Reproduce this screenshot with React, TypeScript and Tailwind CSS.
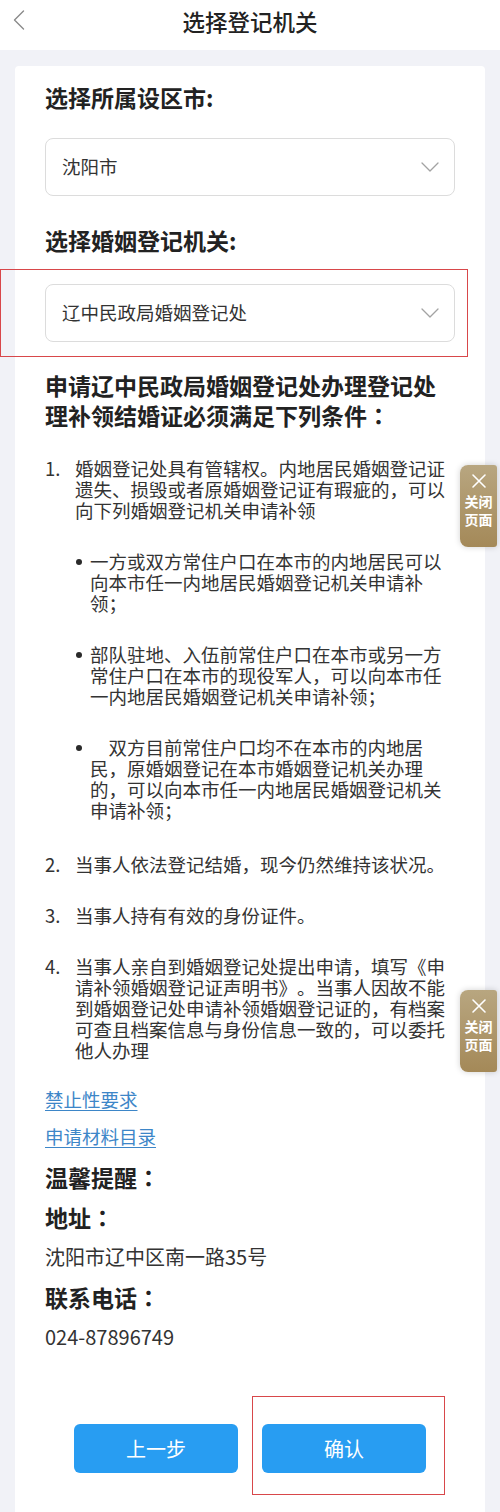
import React from 'react';

const CJK = { fontFamily: '"Noto Sans CJK SC", "Noto Sans", sans-serif' };

const Chevron: React.FC = () => (
  <svg width="18" height="10" viewBox="0 0 18 10" fill="none">
    <path d="M1 1l8 8 8-8" stroke="#a3a3a3" strokeWidth="1.3" strokeLinecap="round" strokeLinejoin="round" />
  </svg>
);

const Select: React.FC<{ value: string }> = ({ value }) => (
  <div className="flex h-[58px] items-center justify-between rounded-[8px] border border-[#dcdcdc] bg-white pl-[16px] pr-[15px]">
    <span className="text-[18.5px] text-[#333]">{value}</span>
    <Chevron />
  </div>
);

// full-width colon drawn centered, as in the screenshot
const Colon: React.FC = () => (
  <span style={{ fontFamily: '"Noto Sans CJK TC", sans-serif' }}>：</span>
);

const CloseTab: React.FC<{ top: string }> = ({ top }) => (
  <div
    className={`absolute right-[3px] ${top} flex h-[82px] w-[37px] flex-col items-center rounded-l-[8px] rounded-r-[3px] bg-gradient-to-b from-[#b8a680] to-[#a48958] pt-[8px] shadow-[0_0_6px_rgba(0,0,0,0.18)]`}
  >
    <svg width="16" height="16" viewBox="0 0 16 16" fill="none">
      <path d="M2 2l12 12M14 2L2 14" stroke="white" strokeWidth="1.6" strokeLinecap="round" />
    </svg>
    <div className="mt-[3px] text-center text-[14px] font-bold leading-[18px] text-white">
      关闭
      <br />
      页面
    </div>
  </div>
);

const NumItem: React.FC<{ n: number; children: React.ReactNode; className?: string }> = ({ n, children, className = '' }) => (
  <div className={`flex ${className}`}>
    <span className="w-[30px] shrink-0">{n}.</span>
    <div className="flex-1">{children}</div>
  </div>
);

const Bullet: React.FC<{ children: React.ReactNode }> = ({ children }) => (
  <div className="mt-[30px] flex">
    <span className="flex h-[21px] w-[15px] shrink-0 items-center">
      <span className="ml-[1px] block h-[6px] w-[6px] rounded-full bg-[#2a2a2a]" />
    </span>
    <span className="flex-1">{children}</span>
  </div>
);

export default function App() {
  return (
    <div
      className="relative min-h-[1512px] w-[500px] overflow-hidden bg-[#f1f2f7] [text-spacing-trim:space-all]"
      style={CJK}
    >
      {/* header */}
      <div className="relative flex h-[50px] items-start justify-center bg-white pt-[5px]">
        <svg className="absolute left-[13px] top-[10px]" width="12" height="20" viewBox="0 0 12 20" fill="none">
          <path d="M10.5 1L1.5 10l9 9" stroke="#8a8a8a" strokeWidth="1.4" strokeLinecap="round" strokeLinejoin="round" />
        </svg>
        <h1 className="text-[22.5px] font-medium leading-[32px] text-[#222]">选择登记机关</h1>
      </div>

      {/* card */}
      <div className="mx-[15px] mt-[16px] rounded-[4px] bg-white px-[30px] pb-[60px] pt-[16px]">
        <h2 className="text-[23px] font-bold leading-[30px] text-[#222]">选择所属设区市:</h2>
        <div className="mt-[26px]">
          <Select value="沈阳市" />
        </div>

        <h2 className="mt-[29px] text-[23px] font-bold leading-[30px] text-[#222]">选择婚姻登记机关:</h2>
        <div className="relative mt-[29px]">
          <Select value="辽中民政局婚姻登记处" />
          <div className="pointer-events-none absolute left-[-45px] top-[-15px] h-[88px] w-[468px] border-[1.5px] border-[#d8474a]" />
        </div>

        <h3 className="mt-[28px] text-[23px] font-bold leading-[30px] text-[#222]">
          申请辽中民政局婚姻登记处办理登记处理补领结婚证必须满足下列条件<Colon />
        </h3>

        <div className="mt-[28px] text-[18.5px] leading-[21px] text-[#333]">
          <NumItem n={1}>
            婚姻登记处具有管辖权。内地居民婚姻登记证遗失、损毁或者原婚姻登记证有瑕疵的，可以向下列婚姻登记机关申请补领
            <Bullet>一方或双方常住户口在本市的内地居民可以向本市任一内地居民婚姻登记机关申请补领；</Bullet>
            <Bullet>部队驻地、入伍前常住户口在本市或另一方常住户口在本市的现役军人，可以向本市任一内地居民婚姻登记机关申请补领；</Bullet>
            <Bullet>{'\u3000'}双方目前常住户口均不在本市的内地居民，原婚姻登记在本市婚姻登记机关办理的，可以向本市任一内地居民婚姻登记机关申请补领；</Bullet>
          </NumItem>
          <NumItem n={2} className="mt-[33px]">
            当事人依法登记结婚，现今仍然维持该状况。
          </NumItem>
          <NumItem n={3} className="mt-[30px]">
            当事人持有有效的身份证件。
          </NumItem>
          <NumItem n={4} className="mt-[30px]">
            当事人亲自到婚姻登记处提出申请，填写《申请补领婚姻登记证声明书》。当事人因故不能到婚姻登记处申请补领婚姻登记证的，有档案可查且档案信息与身份信息一致的，可以委托他人办理
          </NumItem>
        </div>

        <div className="mt-[20px] text-[18.5px] leading-[37px] text-[#3d86c8]">
          <div>
            <a className="underline underline-offset-[3px]">禁止性要求</a>
          </div>
          <div>
            <a className="underline underline-offset-[3px]">申请材料目录</a>
          </div>
        </div>

        <div className="mt-[2px] leading-[40px]">
          <div className="text-[23px] font-bold text-[#222]">
            温馨提醒<Colon />
          </div>
          <div className="text-[23px] font-bold text-[#222]">
            地址<Colon />
          </div>
          <div className="text-[20px] text-[#333]">沈阳市辽中区南一路35号</div>
          <div className="text-[23px] font-bold text-[#222]">
            联系电话<Colon />
          </div>
          <div className="text-[20px] text-[#333]">024-87896749</div>
        </div>

        <div className="mt-[67px] flex justify-center gap-[24px]">
          <button className="h-[49px] w-[164px] rounded-[6px] bg-[#289df2] text-[20px] text-white">上一步</button>
          <div className="relative">
            <button className="h-[49px] w-[164px] rounded-[6px] bg-[#289df2] text-[20px] text-white">确认</button>
            <div className="pointer-events-none absolute left-[-10px] top-[-28px] h-[99px] w-[193px] border-[1.5px] border-[#d8474a]" />
          </div>
        </div>
      </div>

      <CloseTab top="top-[465px]" />
      <CloseTab top="top-[990px]" />
    </div>
  );
}
